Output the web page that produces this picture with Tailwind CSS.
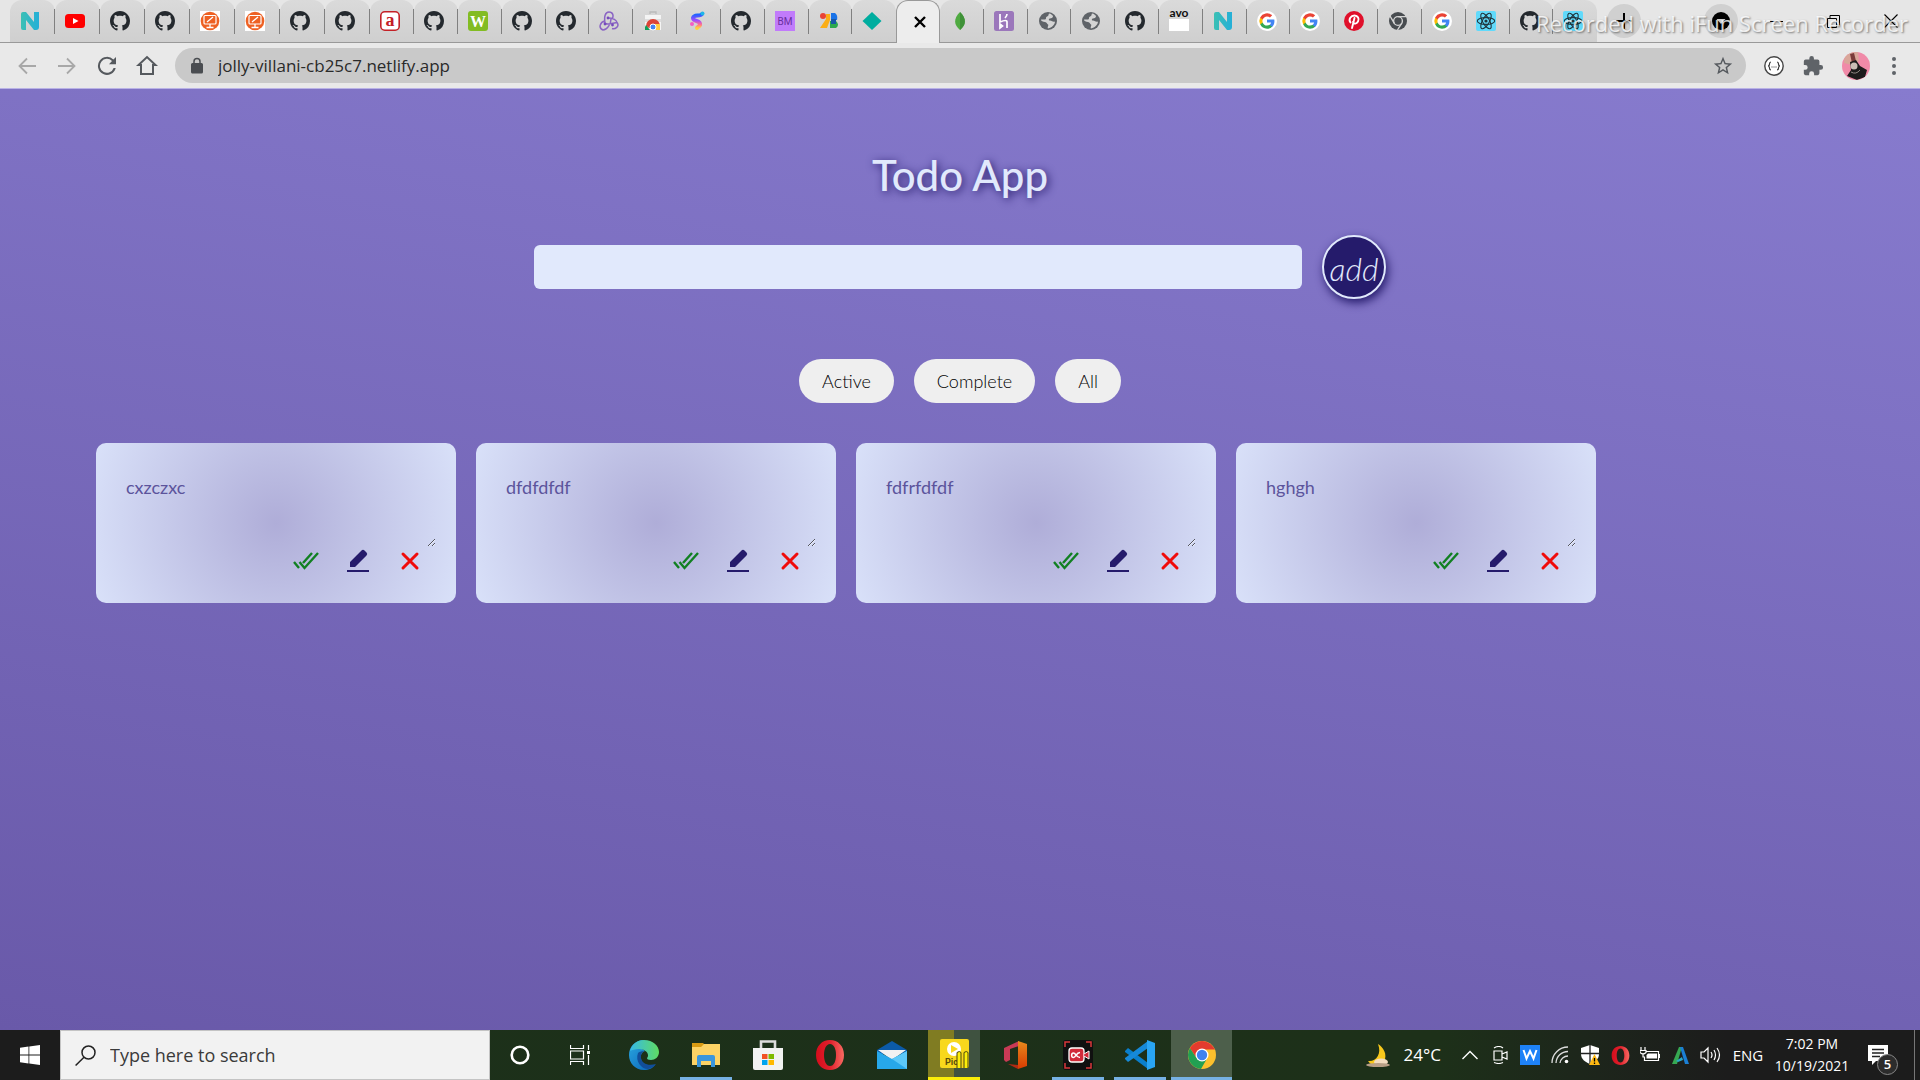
<!DOCTYPE html>
<html lang="en">
<head>
<meta charset="utf-8">
<meta name="viewport" content="width=device-width, initial-scale=1">
<title>Todo App</title>
<script src="https://cdn.jsdelivr.net/npm/@tailwindcss/browser@4"></script>
</head>
<body class="flex min-h-screen flex-col font-['Open_Sans','Noto_Sans',sans-serif]">

<!-- Shared icon shapes -->
<svg class="absolute size-0" aria-hidden="true">
  <defs>
    <linearGradient id="teal" x1="0" x2="1"><stop offset="0" stop-color="#3cc0b4"/><stop offset="1" stop-color="#25afd8"/></linearGradient>
    <linearGradient id="edgeA" x1="0" y1="0" x2="1" y2="1"><stop offset="0" stop-color="#2aa8e0"/><stop offset="1" stop-color="#0a62b8"/></linearGradient>
    <linearGradient id="edgeB" x1="0" x2="1"><stop offset="0" stop-color="#36b9e8"/><stop offset="1" stop-color="#5fdb62"/></linearGradient>
    <linearGradient id="opera" x1="0" x2="1"><stop offset="0" stop-color="#d50d1c"/><stop offset="0.5" stop-color="#e0202c"/><stop offset="1" stop-color="#f96a62"/></linearGradient>
    <linearGradient id="swirl" x1="0" y1="0" x2="0" y2="1"><stop offset="0" stop-color="#1565ff"/><stop offset="0.45" stop-color="#a34bff"/><stop offset="0.75" stop-color="#ff6f91"/><stop offset="1" stop-color="#ffd23f"/></linearGradient>
    <linearGradient id="office" x1="0" y1="0" x2="0" y2="1"><stop offset="0" stop-color="#e98a1d"/><stop offset="1" stop-color="#d83b01"/></linearGradient>
  </defs>
  <symbol id="n" viewBox="0 0 20 20"><path fill="url(#teal)" d="M1 3q0-2 2-2h3l8 10V1h5v15q0 3-3 3h-2L6 9v10H3q-2 0-2-2z"/></symbol>
  <symbol id="yt" viewBox="0 0 20 20"><rect y="3" width="20" height="14" rx="3.500" fill="#f00"/><path fill="#fff" d="M8 7l5.500 3L8 13z"/></symbol>
  <symbol id="gh" viewBox="0 0 16 16"><path fill="#24292e" d="M8 0C3.580 0 0 3.580 0 8c0 3.540 2.290 6.530 5.470 7.590.4.070.55-.17.55-.38 0-.19-.01-.82-.01-1.490-2.010.37-2.530-.49-2.690-.94-.09-.23-.48-.94-.82-1.130-.28-.15-.68-.52-.01-.53.63-.01 1.080.58 1.230.82.72 1.210 1.870.87 2.330.66.07-.52.28-.87.51-1.070-1.780-.2-3.640-.89-3.640-3.950 0-.87.31-1.590.82-2.150-.08-.2-.36-1.020.08-2.120 0 0 .67-.21 2.200.82.64-.18 1.320-.27 2-.27s1.360.09 2 .27c1.530-1.040 2.200-.82 2.200-.82.44 1.100.16 1.920.08 2.120.51.56.82 1.270.82 2.150 0 3.070-1.870 3.750-3.650 3.950.29.25.54.73.54 1.480 0 1.070-.01 1.930-.01 2.200 0 .21.15.46.55.38A8.010 8.010 0 0 0 16 8c0-4.420-3.580-8-8-8z"/></symbol>
  <symbol id="board" viewBox="0 0 20 20"><rect width="20" height="20" fill="#fff"/><circle cx="10" cy="10" r="9.300" fill="#ee6123"/><rect x="4" y="4.500" width="12" height="8.500" rx="1" fill="none" stroke="#fff" stroke-width="1.200"/><path d="M7 11l6-5M10 13v3M6.500 16.500h7" stroke="#fff" stroke-width="1.300"/></symbol>
  <symbol id="a" viewBox="0 0 20 20"><rect x=".8" y=".8" width="18.400" height="18.400" rx="4" fill="#fff" stroke="#c32026" stroke-width="1.600"/><text x="10" y="15" text-anchor="middle" font-family="Liberation Serif" font-weight="700" font-size="18" fill="#c32026">a</text></symbol>
  <symbol id="w" viewBox="0 0 20 20"><rect width="20" height="20" rx="3" fill="#82bc23"/><text x="10" y="15.500" text-anchor="middle" font-family="Liberation Serif" font-weight="700" font-size="16" fill="#fff">W</text></symbol>
  <symbol id="redux" viewBox="0 0 20 20"><g fill="none" stroke="#8b65c4" stroke-width="1.500"><path d="M6 12C5 6 6 1 10 1s5 4 3 7M6 12.500c2 1 8 0 12-1 3 4-2 7-5 6M12 8c0 5-4 11-8 11-5-2-3-8 2-9M9 7c5 0 9 2 9 5"/></g><circle cx="13.500" cy="14" r="1.400" fill="#764abc"/><circle cx="9" cy="7" r="1.400" fill="#764abc"/><circle cx="6" cy="13" r="1.400" fill="#764abc"/></symbol>
  <symbol id="store" viewBox="0 0 20 20"><path d="M7 3V1h6v2" fill="none" stroke="#bbb" stroke-width="1.300"/><path fill="#f4f4f4" d="M2 4h16v15H2z"/><path fill="#ddd" d="M2 8h16v3H2z"/><path fill="#db4437" d="M3 15a7 7 0 0 1 14 0l-3 2H6z"/><path fill="#0f9d58" d="M3 14l4 5H2v-3z"/><path fill="#ffcd40" d="M17 13h-6l2 6h4z"/><circle cx="10" cy="16" r="3" fill="#4285f4" stroke="#fff"/></symbol>
  <symbol id="s" viewBox="0 0 20 20"><path fill="none" stroke="url(#swirl)" stroke-width="4" stroke-linecap="round" d="M15 3c-2 3-8 0-9 4 0 4 8 2 7 7-1 2-3 2-3 3"/><circle cx="5" cy="13" r="2" fill="#f65cc5"/><circle cx="15.500" cy="2.500" r="2" fill="#1fb6e8"/></symbol>
  <symbol id="bm" viewBox="0 0 20 20"><rect width="20" height="20" fill="#c17bfb"/><text x="10" y="13.500" text-anchor="middle" font-family="Roboto" font-size="10" fill="#6a2fa0">BM</text></symbol>
  <symbol id="zb" viewBox="0 0 20 20"><circle cx="4" cy="5" r="3" fill="#ea4335"/><path fill="#fbae17" d="M7 3h4v6L8 17H1l6-9z"/><path fill="#1a73e8" d="M12 2h4q3 2 2 7h-6z"/><path fill="#2da94f" d="M11 10h6q4 4 0 7h-6z"/><path fill="#1859a8" d="M12 8h5v5h-5z"/></symbol>
  <symbol id="diamond" viewBox="0 0 20 20"><path fill="#00ad9f" d="M10 1l9.500 9-9.500 9-9.500-9z"/></symbol>
  <symbol id="leaf" viewBox="0 0 20 20"><path fill="#4faa41" d="M10 1c7 7 6 13 0 18C4 14 3 8 10 1z"/><path fill="#3f9138" d="M10 1c7 7 6 13 0 18z"/></symbol>
  <symbol id="heroku" viewBox="0 0 20 20"><rect width="20" height="20" rx="2.500" fill="#9b77bb"/><path d="M6 3v8q7-3 7 0v6M6 13v4l2.500-2zM13 3q0 2-2 4" fill="none" stroke="#fff" stroke-width="1.700"/></symbol>
  <symbol id="globe" viewBox="0 0 20 20"><circle cx="10" cy="10" r="9" fill="#5f6368"/><path fill="#d4d4d4" d="M11 2.500c-1 2 0 2-2 3s0 2-2 3H3c0 2 2 2 4 2.500s2 2 3 2.500-1 3 0 4c4-1 7-4 7-7-2 1-3-1-5-1s-1-2 0-2 3-1 3-2-2-3-4-3z"/></symbol>
  <symbol id="avo" viewBox="0 0 20 20"><path fill="#fff" d="M0 8h20v12H0z"/><text x="10" y="6" text-anchor="middle" font-family="Lato" font-weight="700" font-size="12" fill="#111">avo</text></symbol>
  <symbol id="g" viewBox="0 0 20 20"><circle cx="10" cy="10" r="10" fill="#fff"/><g transform="translate(1.600 1.600) scale(.7)"><path fill="#4285f4" d="M22.600 12.200c0-.8-.1-1.500-.2-2.200H12v4.300h5.900a5 5 0 0 1-2.200 3.300v2.800h3.600c2.100-2 3.300-4.800 3.300-8.200z"/><path fill="#34a853" d="M12 23c3 0 5.500-1 7.300-2.700l-3.600-2.800c-1 .7-2.200 1-3.700 1-2.900 0-5.300-1.900-6.200-4.500H2.200v2.800A11 11 0 0 0 12 23z"/><path fill="#fbbc05" d="M5.800 14.100a6.600 6.600 0 0 1 0-4.200V7.100H2.200a11 11 0 0 0 0 9.800z"/><path fill="#ea4335" d="M12 5.400c1.600 0 3.100.6 4.200 1.600l3.200-3.100A11 11 0 0 0 2.200 7.100l3.600 2.800C6.700 7.300 9.100 5.400 12 5.400z"/></g></symbol>
  <symbol id="pin" viewBox="0 0 20 20"><circle cx="10" cy="10" r="10" fill="#e0102b"/><path d="M6.500 11.500C4 8 7 4.500 10.500 4.500S15.500 8 14 10.500s-4 3-5 .5m1.500-4L8 17" fill="none" stroke="#fff" stroke-width="1.900" stroke-linecap="round"/></symbol>
  <symbol id="chrg" viewBox="0 0 20 20"><circle cx="10" cy="10" r="9" fill="#484c50"/><circle cx="10" cy="10" r="4.400" fill="#484c50" stroke="#d4d4d4" stroke-width="1.400"/><path d="M10 5.600h8.400M6.200 12.200L2 5M13.800 12.200L9.500 19" stroke="#d4d4d4" stroke-width="1.400"/></symbol>
  <symbol id="react" viewBox="0 0 20 20"><rect width="20" height="20" rx="2" fill="#61dafb"/><g fill="none" stroke="#20343c" stroke-width="1.100"><ellipse cx="10" cy="10" rx="8.700" ry="3.400"/><ellipse cx="10" cy="10" rx="8.700" ry="3.400" transform="rotate(60 10 10)"/><ellipse cx="10" cy="10" rx="8.700" ry="3.400" transform="rotate(120 10 10)"/></g><circle cx="10" cy="10" r="1.600" fill="#20343c"/></symbol>
  <symbol id="operaO" viewBox="0 0 30 30"><path fill="url(#opera)" fill-rule="evenodd" d="M15 0c8 0 14 6 14 15s-6 15-14 15S1 24 1 15 7 0 15 0zm0 4c-4 0-6 5-6 11s2 11 6 11 6-5 6-11-2-11-6-11z"/></symbol>
  <symbol id="check2" viewBox="0 0 28 28"><path d="M2 14l5 6M7.500 14l5 6L26 5M11 15l9-10" transform="translate(0 1)" fill="none" stroke="#118022" stroke-width="2.400"/></symbol>
  <symbol id="pen" viewBox="0 0 28 28"><path fill="#251b6b" d="M6 20v-5L17.500 3.500q1.500-1.500 3 0l2 2q1.500 1.500 0 3L11 20zM3 23h22v2H3z"/></symbol>
  <symbol id="cross" viewBox="0 0 28 28"><path d="M7 7l14 14M21 7L7 21" stroke="#f00b0b" stroke-width="3" stroke-linecap="round"/></symbol>
</svg>

<!-- Browser chrome -->
<header class="relative">
  <div class="flex h-[43px] border-b border-[#999] bg-[#e6e6e6] pl-[10px]">
    <nav aria-label="Tabs" class="flex flex-1 *:relative *:flex *:items-center *:rounded-t-xl *:bg-linear-to-b *:from-[#dadada] *:to-[#cfcfcf] *:pl-[10px] *:after:absolute *:after:right-0 *:after:top-[9px] *:after:h-[25px] *:after:w-px *:after:bg-[#808080]">
      <button aria-label="Netlify tab" class="flex-[450]"><svg class="size-5"><use href="#n"/></svg></button>
      <button aria-label="YouTube tab" class="flex-[450]"><svg class="size-5"><use href="#yt"/></svg></button>
      <button aria-label="GitHub tab" class="flex-[450]"><svg class="size-5"><use href="#gh"/></svg></button>
      <button aria-label="GitHub tab" class="flex-[450]"><svg class="size-5"><use href="#gh"/></svg></button>
      <button aria-label="Board tab" class="flex-[450]"><svg class="size-5"><use href="#board"/></svg></button>
      <button aria-label="Board tab" class="flex-[450]"><svg class="size-5"><use href="#board"/></svg></button>
      <button aria-label="GitHub tab" class="flex-[450]"><svg class="size-5"><use href="#gh"/></svg></button>
      <button aria-label="GitHub tab" class="flex-[450]"><svg class="size-5"><use href="#gh"/></svg></button>
      <button aria-label="Tab a" class="flex-[434]"><svg class="size-5"><use href="#a"/></svg></button>
      <button aria-label="GitHub tab" class="flex-[434]"><svg class="size-5"><use href="#gh"/></svg></button>
      <button aria-label="Tab W" class="flex-[434]"><svg class="size-5"><use href="#w"/></svg></button>
      <button aria-label="GitHub tab" class="flex-[434]"><svg class="size-5"><use href="#gh"/></svg></button>
      <button aria-label="GitHub tab" class="flex-[434]"><svg class="size-5"><use href="#gh"/></svg></button>
      <button aria-label="Redux tab" class="flex-[434]"><svg class="size-5"><use href="#redux"/></svg></button>
      <button aria-label="Web Store tab" class="flex-[434]"><svg class="size-5"><use href="#store"/></svg></button>
      <button aria-label="Swirl tab" class="flex-[434]"><svg class="size-5"><use href="#s"/></svg></button>
      <button aria-label="GitHub tab" class="flex-[434]"><svg class="size-5"><use href="#gh"/></svg></button>
      <button aria-label="BM tab" class="flex-[434]"><svg class="size-5"><use href="#bm"/></svg></button>
      <button aria-label="Colour blocks tab" class="flex-[434]"><svg class="size-5"><use href="#zb"/></svg></button>
      <button aria-label="Netlify app tab" class="flex-[434] after:hidden!"><svg class="size-5"><use href="#diamond"/></svg></button>
      <button aria-label="Close tab" class="-mb-px flex-[434] justify-center border border-b-0 border-[#999] bg-[#ededed] bg-none! pl-[6px]! pr-[2px] after:hidden!"><svg class="size-4" viewBox="0 0 16 16"><path d="M3 3l10 10M13 3L3 13" stroke="#000" stroke-width="2.400"/></svg></button>
      <button aria-label="MongoDB tab" class="flex-[434]"><svg class="size-5"><use href="#leaf"/></svg></button>
      <button aria-label="Heroku tab" class="flex-[434]"><svg class="size-5"><use href="#heroku"/></svg></button>
      <button aria-label="Site tab" class="flex-[434]"><svg class="size-5"><use href="#globe"/></svg></button>
      <button aria-label="Site tab" class="flex-[434]"><svg class="size-5"><use href="#globe"/></svg></button>
      <button aria-label="GitHub tab" class="flex-[434]"><svg class="size-5"><use href="#gh"/></svg></button>
      <button aria-label="Avo tab" class="flex-[434]"><svg class="size-5 overflow-visible"><use href="#avo"/></svg></button>
      <button aria-label="Netlify tab" class="flex-[434]"><svg class="size-5"><use href="#n"/></svg></button>
      <button aria-label="Google tab" class="flex-[434]"><svg class="size-5"><use href="#g"/></svg></button>
      <button aria-label="Google tab" class="flex-[434]"><svg class="size-5"><use href="#g"/></svg></button>
      <button aria-label="Pinterest tab" class="flex-[434]"><svg class="size-5"><use href="#pin"/></svg></button>
      <button aria-label="Chrome tab" class="flex-[434]"><svg class="size-5"><use href="#chrg"/></svg></button>
      <button aria-label="Google tab" class="flex-[434]"><svg class="size-5"><use href="#g"/></svg></button>
      <button aria-label="React tab" class="flex-[434]"><svg class="size-5"><use href="#react"/></svg></button>
      <button aria-label="GitHub tab" class="flex-[434]"><svg class="size-5"><use href="#gh"/></svg></button>
      <button aria-label="React tab" class="flex-[434] after:hidden!"><svg class="size-5"><use href="#react"/></svg></button>
    </nav>
    <div class="flex items-center">
      <button aria-label="New tab" class="ml-[10px] grid size-[34px] place-items-center rounded-full bg-[#d0d0d0]"><svg class="size-4" viewBox="0 0 16 16"><path d="M8 0v16M0 8h16" stroke="#000" stroke-width="2"/></svg></button>
      <button aria-label="Search tabs" class="ml-[63px] grid size-[34px] place-items-center rounded-full bg-[#d0d0d0]"><svg class="size-[18px]" viewBox="0 0 18 18"><circle cx="9" cy="9" r="9"/><path d="M4.500 7h9L9 12z" fill="#d0d0d0"/></svg></button>
      <button aria-label="Minimize" class="ml-[10px] grid h-9 w-[57px] place-items-center"><svg class="h-px w-[13px] bg-black"></svg></button>
      <button aria-label="Restore" class="grid h-9 w-[57px] place-items-center"><svg class="size-[13px]" viewBox="0 0 13 13"><path d="M.5 3.500h9v9h-9zM3 3V.5h9.500V10H10" fill="none" stroke="#000"/></svg></button>
      <button aria-label="Close" class="mr-px grid h-9 w-[57px] place-items-center"><svg class="size-[14px]" viewBox="0 0 14 14"><path d="M.5.5l13 13M13.500.5l-13 13" stroke="#000" stroke-width="1.100"/></svg></button>
    </div>
  </div>
  <span class="absolute right-3 top-1 text-[22px] leading-[38px] whitespace-nowrap text-white/80 [text-shadow:1px_1px_2px_rgb(0_0_0/0.5)]">Recorded with iFun Screen Recorder</span>

  <div class="flex h-[46px] items-center border-b border-[#b9b2e6] bg-[#e9e9e9] pl-[15px] pr-5">
    <div class="flex items-center gap-4">
      <button aria-label="Back"><svg class="size-6" viewBox="0 0 24 24"><path d="M21 12H5M12 4.500L4.500 12l7.500 7.500" fill="none" stroke="#a8a8a8" stroke-width="1.800"/></svg></button>
      <button aria-label="Forward"><svg class="size-6" viewBox="0 0 24 24"><path d="M3 12h16M12 4.500l7.500 7.500-7.500 7.500" fill="none" stroke="#a8a8a8" stroke-width="1.800"/></svg></button>
      <button aria-label="Reload"><svg class="size-6" viewBox="0 0 24 24"><path fill="#55595e" d="M18.400 5.600A9 9 0 1 0 20.700 14h-2.100a7 7 0 1 1-1.600-7l-3 3.300h7V3z"/></svg></button>
      <button aria-label="Home"><svg class="size-6" viewBox="0 0 24 24"><path d="M6 20V11H3.500L12 3l8.500 8H18v9z" fill="none" stroke="#55595e" stroke-width="2"/></svg></button>
    </div>
    <div class="ml-4 flex h-[35px] flex-1 items-center rounded-full bg-[#c9c9c9] pl-[13px] pr-3">
      <svg class="size-[18px]" viewBox="0 0 24 24"><path fill="#4a4d51" d="M18 8h-1V6A5 5 0 0 0 7 6v2H6a2 2 0 0 0-2 2v10c0 1.100.9 2 2 2h12a2 2 0 0 0 2-2V10a2 2 0 0 0-2-2zM9 6a3 3 0 0 1 6 0v2H9z"/></svg>
      <input aria-label="Address" value="jolly-villani-cb25c7.netlify.app" class="ml-3 min-w-0 flex-1 bg-transparent text-[17px] leading-6 text-[#2a2a2a] outline-none">
      <button aria-label="Bookmark"><svg class="size-[22px]" viewBox="0 0 24 24"><path fill="#55595e" d="M22 9.240l-7.190-.62L12 2 9.190 8.630 2 9.240l5.460 4.730L5.820 21 12 17.270 18.180 21l-1.630-7.030zM12 15.400l-3.760 2.270 1-4.280-3.320-2.880 4.380-.38L12 6.100l1.710 4.040 4.380.38-3.320 2.880 1 4.280z"/></svg></button>
    </div>
    <div class="ml-[18px] flex items-center gap-[18px]">
      <button aria-label="JSON formatter"><svg class="size-5" viewBox="0 0 20 20"><circle cx="10" cy="10" r="9.200" fill="#fff" stroke="#444" stroke-width="1.400"/><path d="M7 6Q5.500 6 5.500 8T4 10q1.500 0 1.500 2T7 14M13 6q1.500 0 1.500 2t1.500 2q-1.500 0-1.500 2T13 14M7.500 11h1M9.500 11h1M11.500 11h1" fill="none" stroke="#333" stroke-width="1.200"/></svg></button>
      <button aria-label="Extensions"><svg class="size-[22px]" viewBox="0 0 24 24"><path fill="#5f6368" d="M20.500 11H19V7a2 2 0 0 0-2-2h-4V3.500a2.500 2.500 0 0 0-5 0V5H4a2 2 0 0 0-2 2v3.800h1.500a2.700 2.700 0 0 1 0 5.400H2V20c0 1.100.9 2 2 2h3.800v-1.500a2.700 2.700 0 0 1 5.400 0V22H17a2 2 0 0 0 2-2v-4h1.500a2.500 2.500 0 0 0 0-5z"/></svg></button>
      <button aria-label="Profile"><svg class="size-7 rounded-full" viewBox="0 0 28 28"><path fill="#f08aa8" d="M0 0h28v28H0z"/><path fill="#d9a79a" d="M3 0h13l1 9-7 4-8-2z"/><path fill="#7a3b3a" d="M8 2l4-1 2 8-4 2z"/><path fill="#1d1b1c" d="M8 10l6-2 4 6 7 4-2 7-8 3-10-4 4-6z"/><circle cx="12" cy="14" r="3.500" fill="#c9bdb6"/><path d="M9 20q5 3 9-2" stroke="#8f8883" fill="none"/></svg></button>
      <button aria-label="Menu"><svg class="h-5 w-3" viewBox="0 0 12 20"><g fill="#5f6368"><circle cx="6" cy="3" r="2"/><circle cx="6" cy="10" r="2"/><circle cx="6" cy="17" r="2"/></g></svg></button>
    </div>
  </div>
</header>

<!-- Todo page -->
<main class="flex-1 bg-[linear-gradient(190deg,#877bce,#6959a9)] px-[5%] pt-[50px] font-[Lato,sans-serif]">
  <h1 class="text-center text-[42px] leading-[72px] font-medium text-[#e1e9fc] [text-shadow:2px_2px_8px_#251b6b]">Todo App</h1>
  <form class="mt-6 flex items-center justify-center gap-5">
    <input aria-label="New todo" class="h-11 w-[768px] rounded-md bg-[#e1e9fc] px-3 text-lg outline-none">
    <button type="button" class="grid size-16 shrink-0 place-items-center rounded-full border-2 border-[#e1e9fc] bg-[#251b6b] pt-1 text-[32px] leading-8 font-light text-[#e1e9fc] italic shadow-[2px_4px_10px_#251b6b]">add</button>
  </form>
  <div class="mt-[60px] flex justify-center gap-5 text-lg font-light text-black">
    <button class="h-11 rounded-[22px] bg-[#efefef] px-[23px]">Active</button>
    <button class="h-11 rounded-[22px] bg-[#efefef] px-[23px]">Complete</button>
    <button class="h-11 rounded-[22px] bg-[#efefef] px-[23px]">All</button>
  </div>
  <ul class="mt-10 flex flex-wrap gap-5 pb-10">
    <li class="h-40 w-[360px] rounded-[10px] bg-[radial-gradient(circle,#afadd8,#d9e1f9)] p-5">
      <textarea aria-label="Todo" class="block h-[84px] w-full resize p-[10px] text-lg leading-7 text-[#5c549c]">cxzczxc</textarea>
      <div class="flex justify-end gap-6 pr-3">
        <button aria-label="Complete"><svg class="size-7"><use href="#check2"/></svg></button>
        <button aria-label="Edit"><svg class="size-7"><use href="#pen"/></svg></button>
        <button aria-label="Delete"><svg class="size-7"><use href="#cross"/></svg></button>
      </div>
    </li>
    <li class="h-40 w-[360px] rounded-[10px] bg-[radial-gradient(circle,#afadd8,#d9e1f9)] p-5">
      <textarea aria-label="Todo" class="block h-[84px] w-full resize p-[10px] text-lg leading-7 text-[#5c549c]">dfdfdfdf</textarea>
      <div class="flex justify-end gap-6 pr-3">
        <button aria-label="Complete"><svg class="size-7"><use href="#check2"/></svg></button>
        <button aria-label="Edit"><svg class="size-7"><use href="#pen"/></svg></button>
        <button aria-label="Delete"><svg class="size-7"><use href="#cross"/></svg></button>
      </div>
    </li>
    <li class="h-40 w-[360px] rounded-[10px] bg-[radial-gradient(circle,#afadd8,#d9e1f9)] p-5">
      <textarea aria-label="Todo" class="block h-[84px] w-full resize p-[10px] text-lg leading-7 text-[#5c549c]">fdfrfdfdf</textarea>
      <div class="flex justify-end gap-6 pr-3">
        <button aria-label="Complete"><svg class="size-7"><use href="#check2"/></svg></button>
        <button aria-label="Edit"><svg class="size-7"><use href="#pen"/></svg></button>
        <button aria-label="Delete"><svg class="size-7"><use href="#cross"/></svg></button>
      </div>
    </li>
    <li class="h-40 w-[360px] rounded-[10px] bg-[radial-gradient(circle,#afadd8,#d9e1f9)] p-5">
      <textarea aria-label="Todo" class="block h-[84px] w-full resize p-[10px] text-lg leading-7 text-[#5c549c]">hghgh</textarea>
      <div class="flex justify-end gap-6 pr-3">
        <button aria-label="Complete"><svg class="size-7"><use href="#check2"/></svg></button>
        <button aria-label="Edit"><svg class="size-7"><use href="#pen"/></svg></button>
        <button aria-label="Delete"><svg class="size-7"><use href="#cross"/></svg></button>
      </div>
    </li>
  </ul>
</main>

<!-- Taskbar -->
<footer class="flex h-[50px] bg-linear-to-r from-[#1c301a] via-[#1d3019] via-75% to-[#1c1c1c] to-90% text-white">
  <button aria-label="Start" class="grid w-[60px] place-items-center bg-[#1c1c1c]"><svg class="size-5" viewBox="0 0 20 20"><path fill="#fff" d="M0 2.800L8.500 1.600v8H0zM9.300 1.500L20 0v9.600H9.300zM0 10.400h8.500v8L0 17.200zM9.300 10.400H20V20L9.300 18.500z"/></svg></button>
  <label class="flex w-[430px] items-center gap-[14px] border border-[#c4c4c4] bg-[#f2f2f2] pl-[14px]">
    <svg class="size-[21px]" viewBox="0 0 21 21"><circle cx="13.500" cy="7.500" r="6.500" fill="none" stroke="#222" stroke-width="1.500"/><path d="M9 12.200L.6 20.500" stroke="#222" stroke-width="1.500"/></svg>
    <input placeholder="Type here to search" class="min-w-0 flex-1 text-lg leading-6 outline-none placeholder:text-[#3a3a3a]">
  </label>
  <button aria-label="Cortana" class="grid w-[60px] place-items-center"><svg class="size-5" viewBox="0 0 20 20"><circle cx="10" cy="10" r="8.300" fill="none" stroke="#fff" stroke-width="2.600"/></svg></button>
  <button aria-label="Task view" class="mr-[3px] grid w-[60px] place-items-center"><svg class="size-5" viewBox="0 0 20 20"><path d="M.5 0v3.500h13V0M.5 20v-3.500h13V20M.5 6h13v8H.5zM18.500 0v5M18.500 10v10" fill="none" stroke="#fff" stroke-width="1.200"/><path fill="#fff" d="M17 6h3v3h-3z"/></svg></button>
  <button aria-label="Edge" class="grid w-[62px] place-items-center"><svg class="size-[30px]" viewBox="0 0 30 30"><path fill="url(#edgeA)" d="M15 0C6 0 0 7 0 15s6 15 15 15c5 0 9-2 11-5-7 2-13-1-14-6-1-4 1-7 4-8L9 6z"/><path fill="url(#edgeB)" d="M1 11C3 4 8 0 15 0c9 0 15 6 15 12 0 5-4 8-8 8-3 0-4-1-4-2 1-1 1-2 1-3 0-3-4-6-9-6-4 0-7 1-9 2z"/><path fill="#114e9a" d="M9 13c-3 8 3 16 10 16 3-1 6-2 8-5-8 2-14 0-15-6 0-3 0-5 3-7-3 0-5 1-6 2z"/></svg></button>
  <button aria-label="File Explorer" class="relative grid w-[62px] place-items-center after:absolute after:inset-x-[5px] after:bottom-0 after:h-[3px] after:bg-[#76b1e4]"><svg class="h-6 w-7" viewBox="0 0 28 24"><path fill="#d99b13" d="M0 0h11l2 2v4H0z"/><path fill="#fdd365" d="M0 4h9l3-3h16v21H0z"/><path fill="#3b96dc" d="M5 24V14q0-2 2-2h14q2 0 2 2v10h-4v-6H9v6z"/></svg></button>
  <button aria-label="Microsoft Store" class="grid w-[62px] place-items-center"><svg class="size-[30px]" viewBox="0 0 30 30"><path d="M8 10V1.500h14V10" fill="none" stroke="#ddd" stroke-width="2.600"/><path fill="#f2f2f2" d="M0 8h30v20q0 2-2 2H2q-2 0-2-2z"/><path fill="#f25022" d="M9 14h5.500v5H9z"/><path fill="#7fba00" d="M15.500 14H21v5h-5.500z"/><path fill="#00a4ef" d="M9 20h5.500v5H9z"/><path fill="#ffb900" d="M15.500 20H21v5h-5.500z"/></svg></button>
  <button aria-label="Opera" class="grid w-[62px] place-items-center"><svg class="size-[30px]"><use href="#operaO"/></svg></button>
  <button aria-label="Mail" class="grid w-[62px] place-items-center"><svg class="size-[30px]" viewBox="0 0 30 30"><path fill="#0b5aa8" d="M0 10L15 1l15 9v4H0z"/><path fill="#f2f2f2" d="M1 10h28L15 20z"/><path fill="#27a8ea" d="M0 11l15 8 15-8v18H0z"/><path fill="#5cc8f8" d="M30 11v18L15 19z"/></svg></button>
  <button aria-label="PicPick" class="relative grid w-[62px] place-items-center"><span class="absolute inset-x-[5px] inset-y-0 grid place-items-center border-b-[3px] border-[#fcee09] bg-linear-to-r from-[#807c22] from-50% to-[#3f5240] to-50%"><svg class="size-[29px]" viewBox="0 0 29 29"><rect width="29" height="29" rx="2" fill="#f8d81c"/><circle cx="14" cy="10" r="7" fill="#fff"/><path fill="#f8d81c" d="M11 6l7 4-7 4z"/><text x="5" y="26" font-family="Roboto" font-weight="700" font-size="9" fill="#5a4d0c">Pic</text><path d="M17 13.500q2.500-2 4 0V30h-4zM24 13.500q2.500-2 4 0V30h-4z" fill="#fcee09" stroke="#4a4510"/></svg></span></button>
  <button aria-label="Office" class="grid w-[62px] place-items-center"><svg class="h-7 w-6" viewBox="0 0 24 28"><path fill="#c93a55" d="M0 7l15-7v5L6 8v11l-4 2-2-2z"/><path fill="url(#office)" d="M14 0l9 3v22l-9 3z"/><path fill="#b02a14" d="M4 23l10 1v4z"/></svg></button>
  <button aria-label="iFun Screen Recorder" class="relative grid w-[62px] place-items-center after:absolute after:inset-x-[5px] after:bottom-0 after:h-[3px] after:bg-[#76b1e4]"><svg class="size-[30px]" viewBox="0 0 30 30"><rect width="30" height="30" rx="3" fill="#101010"/><path d="M2 7V2h5M23 2h5v5M28 23v5h-5M7 28H2v-5" fill="none" stroke="#d8373a" stroke-width="1.500"/><rect x="6" y="8" width="15" height="14" rx="3" fill="#d22a3a" stroke="#fff" stroke-width="1.300"/><path d="M21 14l5-3v8l-5-3" fill="#d22a3a" stroke="#fff"/><path d="M17 12.500c-4 0-4 5-6.500 5s-2.500-4.500 0-4.500 2.500 4.500 6.500 4.500" fill="none" stroke="#fff" stroke-width="1.500"/></svg></button>
  <button aria-label="Visual Studio Code" class="relative grid w-[62px] place-items-center after:absolute after:inset-x-[5px] after:bottom-0 after:h-[3px] after:bg-[#76b1e4]"><svg class="size-[30px]" viewBox="0 0 30 30"><path fill="#0a7fcc" d="M0 11l3-3 20 15v6L0 12z"/><path fill="#1689d8" d="M0 19l3 3L23 8V1L0 18z"/><path fill="#29a5f3" d="M22 0l8 3v24l-8 3z"/></svg></button>
  <button aria-label="Chrome" class="grid w-[61px] place-items-center border-b-[3px] border-[#76b1e4] bg-[#4d5f4b] pt-[3px]"><svg class="size-7" viewBox="0 0 28 28"><circle cx="14" cy="14" r="14" fill="#fbc02d"/><path fill="#e33b2e" d="M1.900 7A14 14 0 0 1 26.100 7L27 8.500H14L8.500 17z"/><path fill="#22a052" d="M1.900 7A14 14 0 0 0 13 28l6-10.500L8.500 17z"/><circle cx="14" cy="14" r="6.500" fill="#fff"/><circle cx="14" cy="14" r="5.200" fill="#3f82f0"/></svg></button>

  <div class="ml-auto flex items-center">
    <button class="mr-[14px] flex items-center gap-3 text-[17px]"><svg class="size-[27px]" viewBox="0 0 27 27"><path fill="#f8c81c" d="M13 2c5 3 10 10 6 18-4 6-12 5-16-1 8 1 14-7 10-17z"/><ellipse cx="16" cy="20" rx="7" ry="3.500" fill="#f3dcc0"/><ellipse cx="13" cy="23" rx="12" ry="2" fill="#b89f86"/></svg>24°C</button>
    <button aria-label="Show hidden icons" class="grid w-[30px] place-items-center"><svg class="size-4" viewBox="0 0 16 16"><path d="M.5 12L8 4.500 15.500 12" fill="none" stroke="#fff" stroke-width="1.400"/></svg></button>
    <button aria-label="Meet now" class="grid w-[30px] place-items-center"><svg class="size-[18px]" viewBox="0 0 18 18"><path d="M3 5h8v9H3zM11 8l5-2v7l-5-2M3 2q5-3 9 0M3 16.500q5 2 9 0" fill="none" stroke="#fff" stroke-width="1.200"/></svg></button>
    <button aria-label="Word tray app" class="grid w-[30px] place-items-center"><svg class="size-5" viewBox="0 0 20 20"><path fill="#1e82f7" d="M0 0h20v20H0z"/><path fill="none" stroke="#fff" stroke-width="2" d="M3.500 5l3 8.500L10 6l3.500 7.500 3-8.500"/></svg></button>
    <button aria-label="Network" class="grid w-[30px] place-items-center"><svg class="size-[18px]" viewBox="0 0 18 18"><path d="M1 17A16 16 0 0 1 17 1M5 17A12 12 0 0 1 17 5.500M9 17a8 8 0 0 1 8-7" fill="none" stroke="#ddd" stroke-width="1.300"/><circle cx="15.500" cy="15.500" r="1.800" fill="#fff"/></svg></button>
    <button aria-label="Security" class="grid w-[30px] place-items-center"><svg class="size-5" viewBox="0 0 20 20"><path fill="#fff" d="M10 0l9 3v6c0 5-4 8-9 10-5-2-9-5-9-10V3z"/><path d="M10 0v19M1 8.500h18" stroke="#222" stroke-width="1.300"/><path fill="#fdb813" d="M14.500 9l5.500 11H9z"/><path d="M14.500 13v3.500M14.500 17.500v1.500" stroke="#000" stroke-width="1.300"/></svg></button>
    <button aria-label="Opera tray" class="grid w-[30px] place-items-center"><svg class="size-[19px]"><use href="#operaO"/></svg></button>
    <button aria-label="Battery" class="grid w-[30px] place-items-center"><svg class="h-4 w-5" viewBox="0 0 20 16"><path d="M6 4.500h12.500v9H4.500V10M19.500 7v4M1 0v3M5 0v3M0 3.500h6v2q-3 3-6 0zM3 7v3h2" fill="none" stroke="#fff" stroke-width="1.200"/><path fill="#fff" d="M8 6.500h9v5H6.500V8z"/></svg></button>
    <button aria-label="Autodesk" class="grid w-[30px] place-items-center"><svg class="size-[17px]" viewBox="0 0 17 17"><path fill="#36a852" d="M7 0h3L5 17H0z"/><path fill="#1b7fd4" d="M8 0h3l6 17h-4z"/><path fill="#2aa9c9" d="M4 14l6-4 1 3-5 2z"/></svg></button>
    <button aria-label="Volume" class="grid w-[30px] place-items-center"><svg class="h-[18px] w-[21px]" viewBox="0 0 21 18"><path d="M1 6h3l4-4v14l-4-4H1zM11 6q2 3 0 6M14 4q3 5 0 10M17 2q5 7 0 14" fill="none" stroke="#fff" stroke-width="1.200"/></svg></button>
    <button class="w-[46px] text-center text-[15px]">ENG</button>
    <button class="w-[82px] text-center text-sm leading-[22px]">7:02 PM<br>10/19/2021</button>
    <button aria-label="Notifications, 5 new" class="relative ml-[12px] mr-[17px] h-[50px] w-8"><svg class="absolute left-[3px] top-[15px] size-5" viewBox="0 0 20 20"><path fill="#fff" d="M0 0h20v16H8l-4 4v-4H0z"/><path d="M4 4.500h12M4 8h12M4 11.500h8" stroke="#222" stroke-width="1.300"/></svg><span class="absolute left-[12px] top-6 grid size-[21px] place-items-center rounded-full border border-[#888] bg-[#2c2c2c] text-[13px] font-semibold">5</span></button>
    <span class="mr-[5px] h-[50px] w-px bg-[#777]"></span>
  </div>
</footer>
</body>
</html>
